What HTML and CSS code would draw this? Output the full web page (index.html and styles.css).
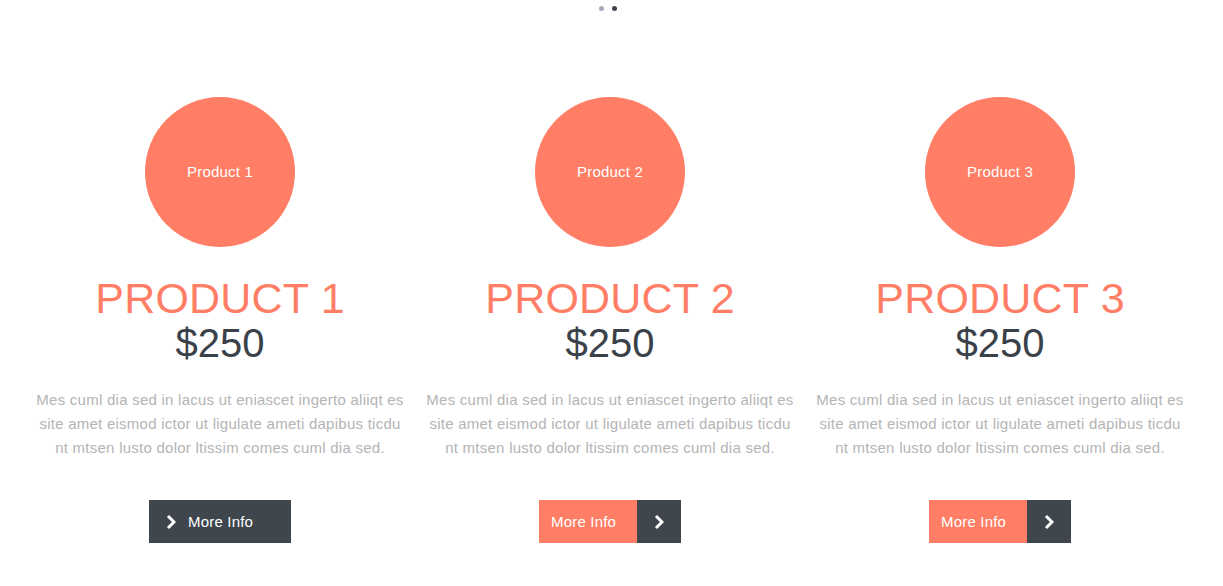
FILE: index.html
```html
<!DOCTYPE html>
<html>
<head>
<meta charset="utf-8">
<link rel="stylesheet" href="styles.css">
</head>
<body>
<div class="dots"><span class="dot"></span><span class="dot dot-active"></span></div>
<div class="products">
  <div class="product">
    <div class="circle">Product 1</div>
    <h2 class="title">PRODUCT 1</h2>
    <div class="price">$250</div>
    <p class="desc">Mes cuml dia sed in lacus ut eniascet ingerto aliiqt es site amet eismod ictor ut ligulate ameti dapibus ticdu nt mtsen lusto dolor ltissim comes cuml dia sed.</p>
    <a class="btn btn-hover" href="#"><svg class="chev" width="10" height="16" viewBox="0 0 10 16"><polyline points="2,2 8,8 2,14" fill="none" stroke="#fff" stroke-width="3"/></svg><span class="btn-text">More Info</span></a>
  </div>
  <div class="product">
    <div class="circle">Product 2</div>
    <h2 class="title">PRODUCT 2</h2>
    <div class="price">$250</div>
    <p class="desc">Mes cuml dia sed in lacus ut eniascet ingerto aliiqt es site amet eismod ictor ut ligulate ameti dapibus ticdu nt mtsen lusto dolor ltissim comes cuml dia sed.</p>
    <a class="btn" href="#"><span class="btn-label">More Info</span><span class="btn-icon"><svg class="chev" width="10" height="16" viewBox="0 0 10 16"><polyline points="2,2 8,8 2,14" fill="none" stroke="#fff" stroke-width="3"/></svg></span></a>
  </div>
  <div class="product">
    <div class="circle">Product 3</div>
    <h2 class="title">PRODUCT 3</h2>
    <div class="price">$250</div>
    <p class="desc">Mes cuml dia sed in lacus ut eniascet ingerto aliiqt es site amet eismod ictor ut ligulate ameti dapibus ticdu nt mtsen lusto dolor ltissim comes cuml dia sed.</p>
    <a class="btn" href="#"><span class="btn-label">More Info</span><span class="btn-icon"><svg class="chev" width="10" height="16" viewBox="0 0 10 16"><polyline points="2,2 8,8 2,14" fill="none" stroke="#fff" stroke-width="3"/></svg></span></a>
  </div>
</div>
</body>
</html>
```

FILE: styles.css
```css
html, body {
  margin: 0;
  padding: 0;
  background: #fff;
  font-family: "Liberation Sans", Arial, sans-serif;
}
.dots {
  display: flex;
  justify-content: center;
  gap: 8px;
  padding-top: 6px;
  padding-right: 8px;
  height: 5px;
}
.dot {
  width: 5px;
  height: 5px;
  border-radius: 50%;
  background: #a4abb8;
}
.dot-active {
  background: #3d4450;
}
.products {
  display: grid;
  grid-template-columns: repeat(3, 390px);
  padding-left: 25px;
  margin-top: 86px;
}
.product {
  display: flex;
  flex-direction: column;
  align-items: center;
  padding: 0 10px;
}
.circle {
  width: 150px;
  height: 150px;
  border-radius: 50%;
  background: #ff7e65;
  color: #fff;
  font-size: 15px;
  letter-spacing: 0.2px;
  display: flex;
  align-items: center;
  justify-content: center;
  padding-bottom: 2px;
  box-sizing: border-box;
}
.title {
  margin: 29px 0 0;
  font-size: 43px;
  line-height: 45px;
  font-weight: normal;
  color: #ff7e65;
  letter-spacing: 0.2px;
}
.price {
  margin-top: 1px;
  font-size: 40px;
  line-height: 42px;
  color: #3a4149;
}
.desc {
  margin: 24px 0 0;
  font-size: 15px;
  line-height: 24px;
  color: #b4b4b4;
  text-align: center;
  letter-spacing: 0.25px;
}
.btn {
  margin-top: 40px;
  width: 142px;
  height: 43px;
  display: flex;
  text-decoration: none;
  color: #fff;
  font-size: 15px;
  letter-spacing: 0.2px;
  background: #3f464e;
}
.btn-hover {
  align-items: center;
  padding-left: 17px;
  gap: 12px;
  box-sizing: border-box;
}
.btn-label {
  width: 98px;
  box-sizing: border-box;
  padding-left: 12px;
  padding-bottom: 1px;
  background: #ff7e65;
  display: flex;
  align-items: center;
}
.btn-text {
  padding-bottom: 1px;
}
.btn-icon {
  flex: 1;
  display: flex;
  align-items: center;
  justify-content: center;
}
.chev {
  display: block;
}
```
